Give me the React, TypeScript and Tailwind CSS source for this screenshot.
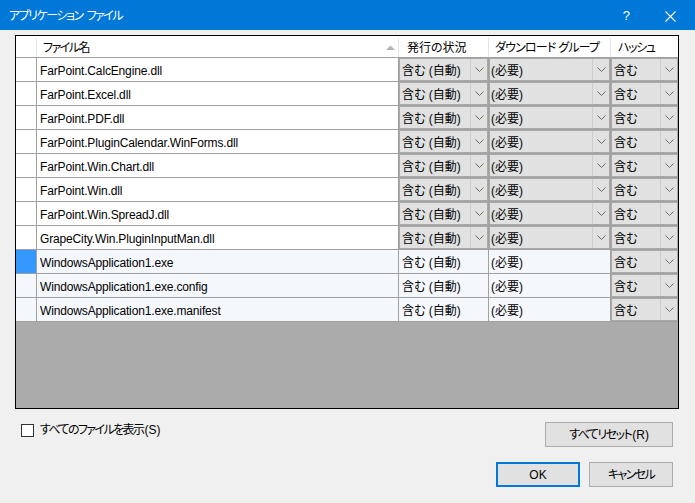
import React from 'react';

type Row = {
  name: string;
  combo: boolean; // status + download are combo boxes
  selected?: boolean;
};

const rows: Row[] = [
  { name: 'FarPoint.CalcEngine.dll', combo: true },
  { name: 'FarPoint.Excel.dll', combo: true },
  { name: 'FarPoint.PDF.dll', combo: true },
  { name: 'FarPoint.PluginCalendar.WinForms.dll', combo: true },
  { name: 'FarPoint.Win.Chart.dll', combo: true },
  { name: 'FarPoint.Win.dll', combo: true },
  { name: 'FarPoint.Win.SpreadJ.dll', combo: true },
  { name: 'GrapeCity.Win.PluginInputMan.dll', combo: true },
  { name: 'WindowsApplication1.exe', combo: false, selected: true },
  { name: 'WindowsApplication1.exe.config', combo: false },
  { name: 'WindowsApplication1.exe.manifest', combo: false },
];

const font = "font-['Liberation_Sans','Noto_Sans_CJK_JP',sans-serif] [font-feature-settings:'palt']";

const Chevron = () => (
  <svg width="9" height="5" viewBox="0 0 9 5" className="block">
    <polyline points="0.5,0.5 4.5,4.5 8.5,0.5" fill="none" stroke="#6d6d6d" strokeWidth="1" />
  </svg>
);

// combo box cell
const Combo = ({ text, pl }: { text: string; pl: string }) => (
  <div className="flex h-full w-full border border-[#a9a9a9] bg-[#e1e1e1]">
    <div className={`flex flex-1 items-center pt-[3px] ${pl} whitespace-nowrap`}>{text}</div>
    <div className="flex w-[17px] items-center justify-center border-l border-[#cdcdcd]">
      <Chevron />
    </div>
  </div>
);

const App: React.FC = () => {
  return (
    <div className={`flex h-[503px] w-[695px] flex-col bg-[#f0f0f0] text-[12px] text-black ${font}`}>
      {/* title bar */}
      <div className="flex h-[30px] items-center bg-[#0078d7] pt-[2px] text-white">
        <span className="ml-[9px] flex flex-1 gap-[4px]">
          <span className="tracking-[-1.5px]">アプリケーション</span>
          <span className="tracking-[-1.5px]">ファイル</span>
        </span>
        <span className="mr-[35px] text-[13px]">?</span>
        <svg width="11" height="11" viewBox="0 0 11 11" className="mr-[19px]">
          <path d="M0.5 0.5 L10.5 10.5 M10.5 0.5 L0.5 10.5" stroke="white" strokeWidth="1.1" />
        </svg>
      </div>

      {/* grid */}
      <div className="ml-[15px] mt-[5px] flex h-[374px] w-[664px] flex-col border border-black bg-[#ababab]">
        <div className="flex h-[22px] border-b border-[#a0a0a0] bg-white pt-[2px] whitespace-nowrap">
          <div className="w-[21px] border-r border-[#e5e5e5]" />
          <div className="flex w-[362px] items-center border-r border-[#e5e5e5] pl-[6px]">
            <span className="flex-1 tracking-[-1.5px]">ファイル名</span>
            <svg width="9" height="5" viewBox="0 0 9 5" className="mr-[3px]">
              <polygon points="0,5 4.5,0.5 9,5" fill="#b4b4b4" />
            </svg>
          </div>
          <div className="flex w-[90px] items-center border-r border-[#e5e5e5] pl-[8px]">発行の状況</div>
          <div className="flex w-[122px] items-center border-r border-[#e5e5e5] pl-[6px] tracking-[-0.8px]">ダウンロード グループ</div>
          <div className="flex flex-1 items-center pl-[7px] tracking-[-1.4px]">ハッシュ</div>
        </div>

        {rows.map((r) => {
          const bg = r.combo ? 'bg-white' : 'bg-[#f4f7fc]';
          return (
            <div key={r.name} className={`flex h-[24px] border-b border-[#a0a0a0] whitespace-nowrap ${bg}`}>
              <div className={`w-[21px] border-r border-[#a0a0a0] ${r.selected ? 'bg-[#3399ff]' : ''}`} />
              <div className="flex w-[362px] items-center border-r border-[#a0a0a0] pl-[3px] pt-[3px] tracking-[-0.15px]">{r.name}</div>
              <div className="flex w-[90px] items-center border-r border-[#a0a0a0]">
                {r.combo ? <Combo text="含む (自動)" pl="pl-[2px]" /> : <span className="pl-[3px] pt-[3px]">含む (自動)</span>}
              </div>
              <div className="flex w-[122px] items-center border-r border-[#a0a0a0]">
                {r.combo ? <Combo text="(必要)" pl="pl-[1px]" /> : <span className="pl-[2px] pt-[3px]">(必要)</span>}
              </div>
              <div className="flex flex-1 items-center">
                <Combo text="含む" pl="pl-[2px]" />
              </div>
            </div>
          );
        })}
      </div>

      {/* bottom controls */}
      <div className="mt-[13px] flex items-start">
        <div className="ml-[21px] mt-[2px] flex flex-1 items-center">
          <div className="h-[13px] w-[13px] border border-[#333333] bg-white" />
          <span className="ml-[6px] leading-[13px]">
            <span className="tracking-[-1.6px]">すべてのファイルを表示</span>
            <span className="ml-[1px]">(S)</span>
          </span>
        </div>
        <button className="mr-[22px] h-[25px] w-[128px] border border-[#adadad] bg-[#e1e1e1]">
          <span className="tracking-[-1.5px]">すべてリセット</span>
          <span className="ml-[1px]">(R)</span>
        </button>
      </div>
      <div className="mt-[15px] flex justify-end">
        <button className="h-[25px] w-[84px] border-2 border-[#0078d7] bg-[#e1e1e1]">OK</button>
        <button className="ml-[9px] mr-[22px] h-[25px] w-[84px] border border-[#adadad] bg-[#e1e1e1] tracking-[-1.6px]">キャンセル</button>
      </div>
    </div>
  );
};

export default App;
